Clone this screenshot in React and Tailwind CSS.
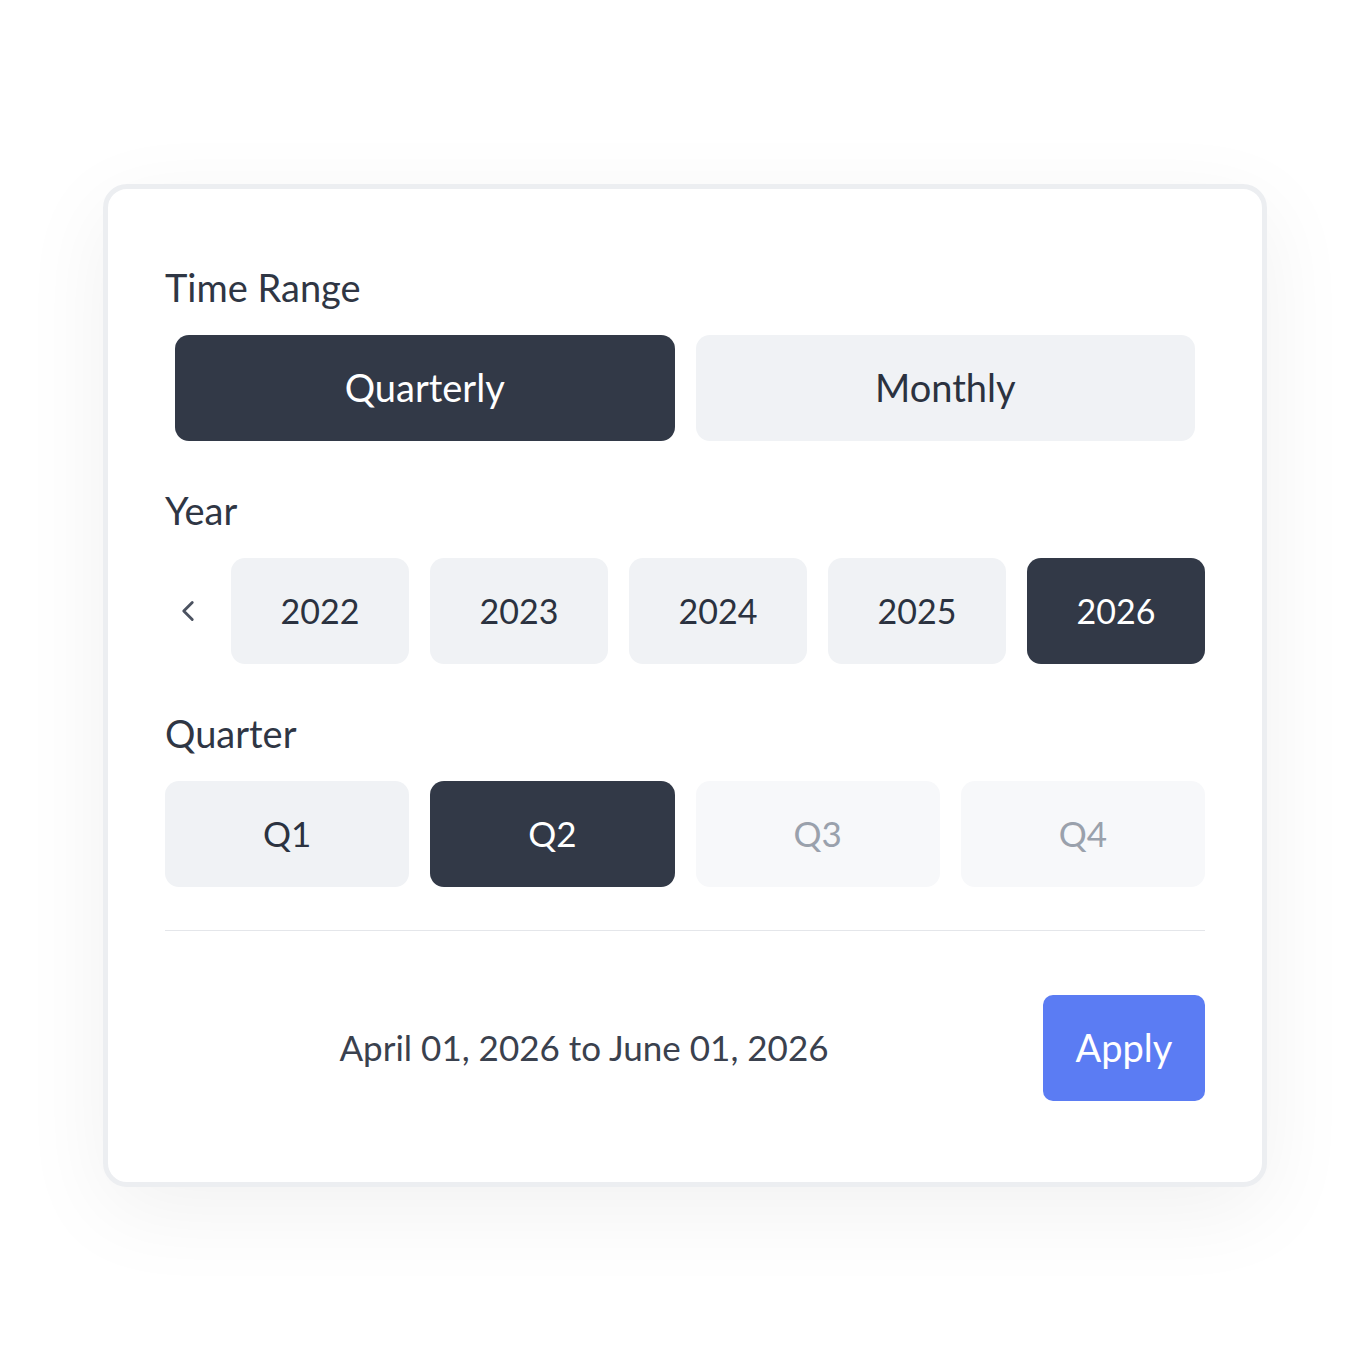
import React from "react";
import { ChevronLeft } from "lucide-react";

const font = { fontFamily: "Lato, 'Open Sans', sans-serif" };

function Label({ children }) {
  return (
    <div className="h-[40px] flex items-center text-[38px] text-[#2f3644] mb-[27px]">
      {children}
    </div>
  );
}

function Pill({ children, active, disabled, className = "" }) {
  let tone = "bg-[#f0f2f5] text-[#2b3240]";
  if (active) tone = "bg-[#323947] text-white";
  if (disabled) tone = "bg-[#f7f8fa] text-[#9aa1ac]";
  return (
    <button
      className={`h-[106px] rounded-[14px] flex items-center justify-center ${tone} ${className}`}
    >
      {children}
    </button>
  );
}

export default function App() {
  const years = ["2022", "2023", "2024", "2025", "2026"];
  const quarters = [
    { q: "Q1" },
    { q: "Q2", active: true },
    { q: "Q3", disabled: true },
    { q: "Q4", disabled: true },
  ];

  return (
    <div className="min-h-[1370px] w-full bg-white flex items-center justify-center" style={font}>
      <div className="w-[1164px] h-[1003px] rounded-[24px] border-[5px] border-[#eceef1] bg-white shadow-[0_24px_90px_rgba(0,0,0,0.06)] px-[57px] pt-[79px]">
        {/* Time range */}
        <Label>Time Range</Label>
        <div className="flex gap-[21px] mx-[10px]">
          <Pill active className="flex-1 text-[38px]">Quarterly</Pill>
          <Pill className="flex-1 text-[38px]">Monthly</Pill>
        </div>

        {/* Year */}
        <div className="mt-[50px]">
          <Label>Year</Label>
          <div className="flex gap-[21px] items-center">
            <div className="w-[45px] flex justify-center text-[#4b5260]">
              <ChevronLeft size={34} strokeWidth={2} />
            </div>
            {years.map((y) => (
              <Pill key={y} active={y === "2026"} className="flex-1 text-[34px]">
                {y}
              </Pill>
            ))}
          </div>
        </div>

        {/* Quarter */}
        <div className="mt-[50px]">
          <Label>Quarter</Label>
          <div className="flex gap-[21px]">
            {quarters.map((q) => (
              <Pill key={q.q} active={q.active} disabled={q.disabled} className="flex-1 text-[35px]">
                {q.q}
              </Pill>
            ))}
          </div>
        </div>

        <div className="mt-[43px] h-px bg-[#e4e6ea]"></div>

        <div className="mt-[64px] flex items-center gap-[40px]">
          <div className="flex-1 text-center text-[35px] text-[#3a414e]">
            April 01, 2026 to June 01, 2026
          </div>
          <button className="w-[162px] h-[106px] rounded-[10px] bg-[#5b7cf3] text-white text-[38px]">
            Apply
          </button>
        </div>
      </div>
    </div>
  );
}
